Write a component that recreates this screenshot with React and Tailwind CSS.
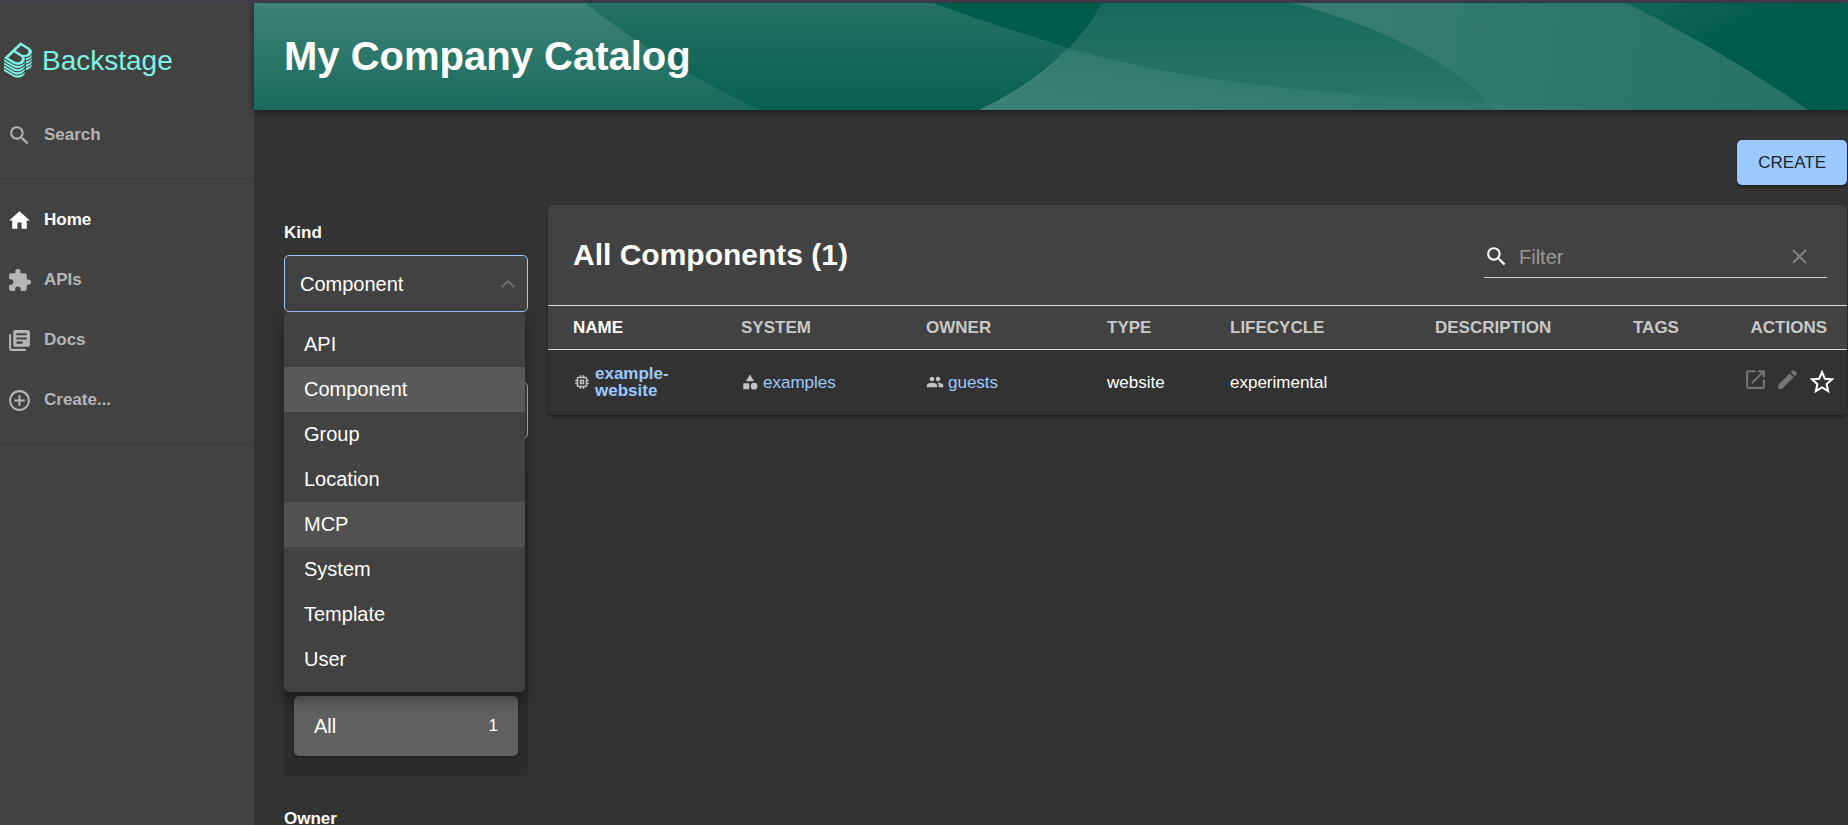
import React from "react";
import {
  MdSearch, MdHome, MdExtension, MdLibraryBooks, MdControlPoint, MdMemory,
  MdCategory, MdPeople, MdOpenInNew, MdEdit, MdStarBorder, MdClear,
} from "react-icons/md";

const LOGO_PATH =
  "M303,166.05a80.69,80.69,0,0,0,13.45-10.37c.79-.77,1.55-1.53,2.3-2.3a83.12,83.12,0,0,0,7.93-9.38A63.69,63.69,0,0,0,333,133.23a48.58,48.58,0,0,0,4.35-16.4c1.49-19.39-10-38.67-35.62-54.22L198.56,0,78.3,115.23,0,190.25l108.6,65.91a111.59,111.59,0,0,0,57.76,16.41c24.92,0,48.8-8.8,66.42-25.69,19.16-18.36,25.52-42.12,13.7-61.87a49.22,49.22,0,0,0-6.8-8.87A89.17,89.17,0,0,0,259,178.29h.15a85.08,85.08,0,0,0,31-5.79A80.88,80.88,0,0,0,303,166.05ZM202.45,225.86c-19.32,18.51-50.4,21.23-75.7,5.9L51.61,186.15l67.45-64.64,76.41,46.38C223,184.58,221.49,207.61,202.45,225.86Zm8.93-82.22-70.65-42.89L205.14,39,274.51,81.1c25.94,15.72,29.31,37,10.55,55A60.69,60.69,0,0,1,211.38,143.64Zm29.86,190c-19.57,18.75-46.17,29.09-74.88,29.09a123.73,123.73,0,0,1-64.1-18.2L0,282.52v24.67L108.6,373.1a111.6,111.6,0,0,0,57.76,16.42c24.92,0,48.8-8.81,66.42-25.69,12.88-12.34,20-27.13,19.68-41.49v-1.79A87.27,87.27,0,0,1,241.24,333.68Zm0-39c-19.57,18.75-46.17,29.08-74.88,29.08a123.81,123.81,0,0,1-64.1-18.19L0,243.53v24.68l108.6,65.91a111.6,111.6,0,0,0,57.76,16.42c24.92,0,48.8-8.81,66.42-25.69,12.88-12.34,20-27.13,19.68-41.5v-1.78A87.27,87.27,0,0,1,241.24,294.7Zm0-39c-19.57,18.76-46.17,29.09-74.88,29.09a123.81,123.81,0,0,1-64.1-18.19L0,204.55v24.68l108.6,65.91a111.59,111.59,0,0,0,57.76,16.41c24.92,0,48.8-8.8,66.42-25.68,12.88-12.35,20-27.13,19.68-41.5v-1.82A86.09,86.09,0,0,1,241.24,255.71Zm0,116.95c-19.57,18.76-46.17,29.09-74.88,29.09a123.73,123.73,0,0,1-64.1-18.2L0,321.5v24.68l108.6,65.9a111.6,111.6,0,0,0,57.76,16.42c24.92,0,48.8-8.8,66.42-25.69,12.88-12.34,20-27.13,19.68-41.49v-1.79A86.29,86.29,0,0,1,241.24,372.66Z";
const LOGO_SIDE =
  "M327,162.45c-.68.69-1.35,1.38-2.05,2.06a94.37,94.37,0,0,1-10.64,8.65,91.35,91.35,0,0,1-11.6,7,94.53,94.53,0,0,1-26.24,8.71,97.69,97.69,0,0,1-14.16,1.57c.5,1.61.9,3.25,1.25,4.9a53.27,53.27,0,0,1,1.14,12V217h.05a84.41,84.41,0,0,0,25.35-5.55,81,81,0,0,0,26.39-16.82c8.8-8.5,15.56-17.86,18.83-27.53,2.21-6.53,2.85-13.21,2.67-19.82v-.6A64.37,64.37,0,0,1,327,162.45Z";

function Logo() {
  return (
    <a href="#home" className="flex h-[102px] items-center gap-2.5 pl-1 pt-3 text-[#7df3e1]">
      <svg viewBox="0 0 338 429" className="h-9 w-7" fill="currentColor" aria-hidden="true">
        <path d={LOGO_PATH} />
        <path d={LOGO_SIDE} />
        <path d={LOGO_SIDE} transform="translate(0 39)" />
        <path d={LOGO_SIDE} transform="translate(0 78)" />
        <path d={LOGO_SIDE} transform="translate(0 117)" />
      </svg>
      <span className="pt-0.5 text-[28px] leading-8">Backstage</span>
    </a>
  );
}

function NavItem({ icon: Icon, label, active }) {
  return (
    <a
      href={"#" + label}
      className={"flex h-15 items-center gap-3 pl-[7px] text-[17px] font-bold " + (active ? "text-white" : "text-[#b5b5b5]")}
    >
      <Icon size={25} aria-hidden="true" />
      {label}
    </a>
  );
}

function HeaderWaves() {
  return (
    <svg viewBox="0 0 1594 107" preserveAspectRatio="none" className="absolute inset-0 h-full w-full" aria-hidden="true">
      <defs>
        <linearGradient id="left" x1="0" y1="0" x2="0" y2="1">
          <stop offset="0" stopColor="#fff" stopOpacity="0.14" />
          <stop offset="1" stopColor="#fff" stopOpacity="0.03" />
        </linearGradient>
        <linearGradient id="edge" x1="0" y1="0" x2="0" y2="1">
          <stop offset="0" stopColor="#fff" stopOpacity="0.12" />
          <stop offset="1" stopColor="#fff" stopOpacity="0.07" />
        </linearGradient>
        <linearGradient id="mid" x1="0" y1="0" x2="0" y2="1">
          <stop offset="0" stopColor="#fff" stopOpacity="0.09" />
          <stop offset="1" stopColor="#fff" stopOpacity="0.17" />
        </linearGradient>
        <linearGradient id="lower" gradientUnits="userSpaceOnUse" x1="780" y1="0" x2="1420" y2="0">
          <stop offset="0" stopColor="#fff" stopOpacity="0.08" />
          <stop offset="1" stopColor="#fff" stopOpacity="0" />
        </linearGradient>
        <linearGradient id="band" gradientUnits="userSpaceOnUse" x1="1100" y1="20" x2="1500" y2="80">
          <stop offset="0" stopColor="#fff" stopOpacity="0.21" />
          <stop offset="1" stopColor="#fff" stopOpacity="0.15" />
        </linearGradient>
        <linearGradient id="corner" gradientUnits="userSpaceOnUse" x1="1400" y1="0" x2="1430" y2="60">
          <stop offset="0" stopColor="#fff" stopOpacity="0.06" />
          <stop offset="1" stopColor="#fff" stopOpacity="0" />
        </linearGradient>
      </defs>
      <rect width="1594" height="107" fill="#005b4b" />
      <path d="M0 0H679Q740 22 796 39L813 45Q790 78 725 107H0Z" fill="url(#left)" />
      <path d="M0 0H331Q410 62 506 107H0Z" fill="url(#edge)" />
      <path d="M848 0H1038Q1180 38 1242 107H725Q812 66 848 0Z" fill="url(#mid)" />
      <path d="M1038 0H1372Q1470 48 1554 107H1242Q1180 38 1038 0Z" fill="url(#band)" />
      <path d="M813 45C930 78 1060 96 1420 107H725Q785 78 813 45Z" fill="url(#lower)" />
      <path d="M1372 0H1594V107H1554Q1470 48 1372 0Z" fill="url(#corner)" />
    </svg>
  );
}

const kinds = ["API", "Component", "Group", "Location", "MCP", "System", "Template", "User"];

function KindMenu() {
  return (
    <ul
      role="listbox"
      aria-label="Kind options"
      className="absolute left-0 top-full z-10 w-[241px] rounded-[5px] bg-[#424242] py-2.5 text-xl text-white shadow-[0_6px_6px_-3px_rgba(0,0,0,0.2),0_10px_14px_1px_rgba(0,0,0,0.14),0_4px_18px_3px_rgba(0,0,0,0.12)]"
    >
      {kinds.map((kind) => (
        <li
          key={kind}
          role="option"
          aria-selected={kind === "Component"}
          className={
            "flex h-[45px] items-center px-5 pb-0.5 " +
            (kind === "Component" ? "bg-[#595959]" : kind === "MCP" ? "bg-[#515151]" : "")
          }
        >
          {kind}
        </li>
      ))}
    </ul>
  );
}

function Filters() {
  return (
    <aside className="w-[244px] shrink-0 pt-4">
      <label htmlFor="kind" className="block text-[17px] font-bold leading-6">Kind</label>
      <div className="relative mt-2.5">
        <select
          id="kind"
          defaultValue="Component"
          className="block h-[57px] w-full appearance-none rounded-[5px] border border-[#9cc9ff] bg-[#424242] px-[15px] text-xl text-white"
        >
          {kinds.map((kind) => <option key={kind}>{kind}</option>)}
        </select>
        <svg viewBox="0 0 14 9" className="pointer-events-none absolute right-[13px] top-6 h-[9px] w-[14px]" fill="none" stroke="#6b6b6b" strokeWidth="2" aria-hidden="true">
          <path d="M1 8l6-6 6 6" />
        </svg>
        <KindMenu />
      </div>
      <select aria-label="Type" className="mt-[70px] block h-[57px] w-full appearance-none rounded-[5px] border border-[#b5b5b5] bg-[#424242]" />
      <section className="mt-[30px] flex h-[307px] flex-col justify-end rounded-[5px] bg-[#2c2c2c] px-2.5 pb-5">
        <button className="flex h-15 items-center justify-between rounded-[5px] bg-[#606060] px-5 text-xl text-white shadow-[0_1px_3px_rgba(0,0,0,0.4)]">
          <span>All</span>
          <span className="text-[17px]">1</span>
        </button>
      </section>
      <h2 className="mt-[31px] text-[17px] font-bold leading-6">Owner</h2>
    </aside>
  );
}

const headCell = "h-11 pl-[25px] text-left";
const bodyCell = "pl-[25px]";

function ComponentsTable() {
  return (
    <section className="min-w-0 flex-1 overflow-hidden rounded-[5px] bg-[#424242] shadow-[0_2px_3px_rgba(0,0,0,0.4)]">
      <div className="flex h-[100px] items-center justify-between pl-[25px] pr-5">
        <h2 className="text-[30px] font-bold leading-9">All Components (1)</h2>
        <div className="mt-1 flex h-[42px] w-[343px] items-center border-b border-[#d0d0d0] pr-[15px]">
          <MdSearch size={25} aria-hidden="true" />
          <input
            type="text"
            aria-label="Filter"
            placeholder="Filter"
            className="ml-2.5 min-w-0 flex-1 bg-transparent text-xl text-white outline-none placeholder:text-[#999999]"
          />
          <button aria-label="Clear filter" className="text-[#808080]"><MdClear size={25} /></button>
        </div>
      </div>
      <table className="w-full table-fixed border-collapse text-[17px]">
        <colgroup>
          <col className="w-[168px]" />
          <col className="w-[185px]" />
          <col className="w-[181px]" />
          <col className="w-[123px]" />
          <col className="w-[205px]" />
          <col />
          <col className="w-[114px]" />
          <col className="w-[125px]" />
        </colgroup>
        <thead className="border-y border-[#d8d8d8] text-[#c8c8c8]">
          <tr>
            <th className={headCell + " text-white"}>NAME</th>
            <th className={headCell}>SYSTEM</th>
            <th className={headCell}>OWNER</th>
            <th className={headCell}>TYPE</th>
            <th className={headCell}>LIFECYCLE</th>
            <th className={headCell}>DESCRIPTION</th>
            <th className={headCell}>TAGS</th>
            <th className="pr-5 text-right">ACTIONS</th>
          </tr>
        </thead>
        <tbody className="bg-[#323232]">
          <tr className="h-[65px]">
            <td className={bodyCell}>
              <a href="#example-website" className="flex items-center gap-1 font-bold leading-[17px] text-[#9cc9ff]">
                <MdMemory size={18} className="shrink-0 text-[#c4c4c4]" aria-hidden="true" />
                <span className="w-20">example-website</span>
              </a>
            </td>
            <td className={bodyCell}>
              <a href="#examples" className="flex items-center gap-1 text-[#9cc9ff]">
                <MdCategory size={18} className="text-[#c4c4c4]" aria-hidden="true" />
                examples
              </a>
            </td>
            <td className={bodyCell}>
              <a href="#guests" className="flex items-center gap-1 text-[#9cc9ff]">
                <MdPeople size={18} className="text-[#c4c4c4]" aria-hidden="true" />
                guests
              </a>
            </td>
            <td className={bodyCell}>website</td>
            <td className={bodyCell}>experimental</td>
            <td />
            <td />
            <td>
              <div className="flex items-center justify-end gap-[7px] pb-1.5 pr-2.5 text-[#757575]">
                <button aria-label="View"><MdOpenInNew size={25} /></button>
                <button aria-label="Edit"><MdEdit size={25} /></button>
                <button aria-label="Add to favorites" className="pt-1.5 text-white"><MdStarBorder size={30} /></button>
              </div>
            </td>
          </tr>
        </tbody>
      </table>
    </section>
  );
}

export default function App() {
  return (
    <div className="flex h-screen flex-col overflow-hidden bg-[#333333] font-['Liberation_Sans',Arial,sans-serif] text-white">
      <div className="h-[3px] shrink-0 bg-[#414152]" />
      <div className="flex min-h-0 flex-1">
        <nav className="w-[254px] shrink-0 bg-[#424242]">
          <Logo />
          <div className="border-b border-[#383838] pb-[13px]">
            <NavItem icon={MdSearch} label="Search" />
          </div>
          <div className="border-b border-[#383838] pb-[13px] pt-[11px]">
            <NavItem icon={MdHome} label="Home" active />
            <NavItem icon={MdExtension} label="APIs" />
            <NavItem icon={MdLibraryBooks} label="Docs" />
            <NavItem icon={MdControlPoint} label="Create..." />
          </div>
        </nav>
        <div className="min-w-0 flex-1">
          <header className="relative flex h-[107px] items-center px-[30px] pb-0.5 shadow-[0_2px_8px_rgba(0,0,0,0.5)]">
            <HeaderWaves />
            <h1 className="relative text-[40px] font-bold leading-[48px]">My Company Catalog</h1>
          </header>
          <main className="pl-[30px] pr-px pt-[30px]">
            <div className="flex justify-end">
              <button className="h-[45px] rounded-[5px] bg-[#9cc9ff] px-[21px] text-[17px] text-[#1c242e] shadow-[0_2px_3px_rgba(0,0,0,0.4)]">
                CREATE
              </button>
            </div>
            <div className="mt-5 flex items-start gap-5">
              <Filters />
              <ComponentsTable />
            </div>
          </main>
        </div>
      </div>
    </div>
  );
}
